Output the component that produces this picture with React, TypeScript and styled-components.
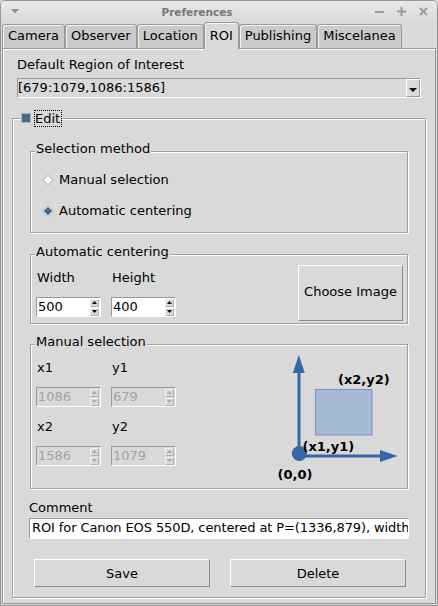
import React from 'react';
import styled, { createGlobalStyle } from 'styled-components';

const GlobalStyle = createGlobalStyle`
  html, body {
    margin: 0;
    padding: 0;
    background: #d9d9d9;
  }
  body {
    font-family: "DejaVu Sans", "Liberation Sans", sans-serif;
    font-size: 13px;
    color: #000;
  }
  * {
    box-sizing: border-box;
  }
`;

const Window = styled.div`
  width: 438px;
  height: 606px;
  display: flex;
  flex-direction: column;
  border: 1px solid #969696;
  border-radius: 5px 5px 0 0;
  background: #d9d9d9;
  overflow: hidden;
`;

const TitleBar = styled.div`
  height: 21px;
  display: flex;
  align-items: center;
  padding: 0 9px 0 10px;
  background: linear-gradient(#e8e8e8, #dadada);
`;

const TitleText = styled.div`
  flex: 1;
  text-align: center;
  font-weight: bold;
  font-size: 10.5px;
  color: #777;
`;

const TitleButtons = styled.div`
  display: flex;
  gap: 13px;
`;

const TabBar = styled.div`
  height: 26px;
  display: flex;
  align-items: flex-end;
  padding-left: 1px;
`;

const Tab = styled.div<{ $active?: boolean }>`
  position: relative;
  z-index: ${(p) => (p.$active ? 1 : 0)};
  line-height: 16px;
  padding: ${(p) => (p.$active ? '5px 5px 6px' : '3px 5px 4px')};
  margin-bottom: ${(p) => (p.$active ? '-2px' : '0')};
  border: 1px solid #9a9a9a;
  border-bottom: none;
  border-radius: 3px 3px 0 0;
  background: ${(p) => (p.$active ? '#d9d9d9' : '#cacaca')};
  box-shadow: inset 1px 1px 0 #f4f4f4;
  white-space: nowrap;
`;

const Panel = styled.div`
  flex: 1;
  margin: 0 1px 1px;
  border: 1px solid #9a9a9a;
  box-shadow: inset 1px 1px 0 #fff;
  padding: 8px 9px 0;
`;

const FieldLabel = styled.div<{ $indent?: number; $top?: number }>`
  line-height: 16px;
  margin-left: ${(p) => p.$indent ?? 0}px;
  margin-top: ${(p) => p.$top ?? 0}px;
`;

const Combo = styled.div`
  margin: 5px 0 0 5px;
  width: 404px;
  height: 20px;
  display: flex;
  border: 1px solid;
  border-color: #9a9a9a #fff #fff #9a9a9a;
  background: #d9d9d9;
`;

const ComboText = styled.span`
  flex: 1;
  line-height: 16px;
  padding-top: 1px;
`;

const ComboButton = styled.div`
  width: 14px;
  display: grid;
  place-items: center;
  border: 1px solid;
  border-color: #fff #9a9a9a #9a9a9a #fff;
  padding-top: 4px;
`;

const LabelFrame = styled.div<{ $pad: string }>`
  position: relative;
  border: 1px solid #9f9f9f;
  box-shadow: inset 1px 1px 0 #fff, 1px 1px 0 #fff;
  padding: ${(p) => p.$pad};
`;

const EditFrame = styled(LabelFrame)`
  margin-top: 20px;
  display: flex;
  flex-direction: column;
`;

const SubFrame = styled(LabelFrame)<{ $gap: number }>`
  margin-top: ${(p) => p.$gap}px;
`;

const Legend = styled.div<{ $top: number; $left: number }>`
  position: absolute;
  top: ${(p) => p.$top}px;
  left: ${(p) => p.$left}px;
  display: flex;
  align-items: center;
  gap: 3px;
  padding: 0 1px;
  line-height: 16px;
  background: #d9d9d9;
`;

const CheckBox = styled.span`
  width: 10px;
  height: 10px;
  margin-top: -1px;
  background: #4a6984;
  border: 1px solid #aab6c2;
`;

const FocusText = styled.span`
  border: 1px dotted #000;
  line-height: 15px;
  padding: 0 1px 0 0;
`;

const RadioList = styled.div`
  display: flex;
  flex-direction: column;
  gap: 15px;
`;

const RadioRow = styled.div`
  display: flex;
  align-items: center;
  gap: 6px;
  line-height: 16px;
`;

const RadioSlot = styled.span`
  width: 11px;
  height: 11px;
  display: grid;
  place-items: center;
`;

const Diamond = styled.span<{ $checked?: boolean }>`
  width: 8px;
  height: 8px;
  transform: rotate(45deg);
  background: ${(p) => (p.$checked ? '#4a6984' : '#fff')};
  border: 1px solid ${(p) => (p.$checked ? '#e6e6e6' : '#b5b5b5')};
`;

const SizeRow = styled.div`
  display: flex;
  justify-content: space-between;
  align-items: flex-start;
`;

const SpinGrid = styled.div<{ $top: number }>`
  margin-top: ${(p) => p.$top}px;
  display: grid;
  grid-template-columns: 65px 65px;
  column-gap: 10px;
  row-gap: 11px;
`;

const GridLabel = styled.div<{ $gapTop?: number }>`
  line-height: 16px;
  padding-left: 1px;
  margin-top: ${(p) => p.$gapTop ?? 0}px;
`;

const SpinField = styled.div<{ $disabled?: boolean }>`
  height: 20px;
  display: flex;
  align-items: center;
  border: 1px solid;
  border-color: #9a9a9a #fff #fff #9a9a9a;
  background: ${(p) => (p.$disabled ? '#d9d9d9' : '#fff')};
  color: ${(p) => (p.$disabled ? '#a3a3a3' : '#000')};
`;

const SpinValue = styled.span`
  flex: 1;
  line-height: 16px;
  padding-left: 1px;
`;

const SpinArrows = styled.div`
  width: 9px;
  margin-right: 1px;
  display: flex;
  flex-direction: column;
  gap: 1px;
`;

const SpinArrow = styled.div`
  height: 8px;
  display: grid;
  place-items: center;
  background: #d9d9d9;
  border: 1px solid;
  border-color: #f2f2f2 #b0b0b0 #b0b0b0 #f2f2f2;
`;

const RaisedButton = styled.button<{ $w: number; $h: number }>`
  width: ${(p) => p.$w}px;
  height: ${(p) => p.$h}px;
  padding: 0;
  font: inherit;
  color: #000;
  background: #d9d9d9;
  border: 1px solid;
  border-color: #fff #8c8c8c #8c8c8c #fff;
`;

const ChooseButton = styled(RaisedButton)`
  flex: none;
  padding-bottom: 3px;
`;

const ManualRow = styled.div`
  display: flex;
  justify-content: space-between;
  align-items: flex-start;
`;

const Diagram = styled.svg`
  flex: none;
  display: block;
`;

const CommentEntry = styled.div`
  margin: 2px 0 0 -1px;
  width: 380px;
  height: 21px;
  padding: 1px 0 0 2px;
  line-height: 16px;
  letter-spacing: -0.1px;
  white-space: nowrap;
  overflow: hidden;
  background: #fff;
  border: 1px solid;
  border-color: #9a9a9a #fff #fff #9a9a9a;
`;

const ButtonRow = styled.div`
  margin-top: 20px;
  padding-left: 4px;
  display: flex;
  gap: 20px;
`;

const Arrow: React.FC<{ up?: boolean; color: string }> = ({ up, color }) => (
  <svg width="5" height="3" viewBox="0 0 5 3">
    <polygon points={up ? '0,3 5,3 2.5,0' : '0,0 5,0 2.5,3'} fill={color} />
  </svg>
);

const Spinbox: React.FC<{ value: string; disabled?: boolean }> = ({ value, disabled }) => {
  const c = disabled ? '#a8a8a8' : '#000';
  return (
    <SpinField $disabled={disabled}>
      <SpinValue>{value}</SpinValue>
      <SpinArrows>
        <SpinArrow>
          <Arrow up color={c} />
        </SpinArrow>
        <SpinArrow>
          <Arrow color={c} />
        </SpinArrow>
      </SpinArrows>
    </SpinField>
  );
};

const tabs = ['Camera', 'Observer', 'Location', 'ROI', 'Publishing', 'Miscelanea'];
const blue = '#3666a6';

const App: React.FC = () => {
  return (
    <>
      <GlobalStyle />
      <Window>
        <TitleBar>
          <svg width="8" height="5" viewBox="0 0 8 5">
            <polygon points="0,0 8,0 4,4.5" fill="#8e8e8e" />
          </svg>
          <TitleText>Preferences</TitleText>
          <TitleButtons>
            <svg width="9" height="9" viewBox="0 0 9 9">
              <rect x="0" y="4" width="9" height="2" fill="#9a9a9a" />
            </svg>
            <svg width="9" height="9" viewBox="0 0 9 9">
              <rect x="0" y="3.5" width="9" height="2" fill="#9a9a9a" />
              <rect x="3.5" y="0" width="2" height="9" fill="#9a9a9a" />
            </svg>
            <svg width="9" height="9" viewBox="0 0 9 9">
              <path d="M1 1 L8 8 M8 1 L1 8" stroke="#9a9a9a" strokeWidth="2" />
            </svg>
          </TitleButtons>
        </TitleBar>

        <TabBar>
          {tabs.map((t) => (
            <Tab key={t} $active={t === 'ROI'}>
              {t}
            </Tab>
          ))}
        </TabBar>

        <Panel>
          <FieldLabel $indent={5}>Default Region of Interest</FieldLabel>
          <Combo>
            <ComboText>[679:1079,1086:1586]</ComboText>
            <ComboButton>
              <svg width="8" height="4" viewBox="0 0 8 4">
                <polygon points="0,0 8,0 4,4" fill="#000" />
              </svg>
            </ComboButton>
          </Combo>

          <EditFrame $pad="32px 17px 10px">
            <Legend $top={-9} $left={7}>
              <CheckBox />
              <FocusText>Edit</FocusText>
            </Legend>

            <SubFrame $gap={0} $pad="20px 0 13px 11px">
              <Legend $top={-11} $left={4}>Selection method</Legend>
              <RadioList>
                <RadioRow>
                  <RadioSlot>
                    <Diamond />
                  </RadioSlot>
                  Manual selection
                </RadioRow>
                <RadioRow>
                  <RadioSlot>
                    <Diamond $checked />
                  </RadioSlot>
                  Automatic centering
                </RadioRow>
              </RadioList>
            </SubFrame>

            <SubFrame $gap={21} $pad="10px 4px 2px 5px">
              <Legend $top={-11} $left={4}>Automatic centering</Legend>
              <SizeRow>
                <SpinGrid $top={5}>
                  <GridLabel>Width</GridLabel>
                  <GridLabel>Height</GridLabel>
                  <Spinbox value="500" />
                  <Spinbox value="400" />
                </SpinGrid>
                <ChooseButton $w={105} $h={56}>Choose Image</ChooseButton>
              </SizeRow>
            </SubFrame>

            <SubFrame $gap={20} $pad="8px 2px 0 5px">
              <Legend $top={-11} $left={4}>Manual selection</Legend>
              <ManualRow>
                <SpinGrid $top={7}>
                  <GridLabel>x1</GridLabel>
                  <GridLabel>y1</GridLabel>
                  <Spinbox value="1086" disabled />
                  <Spinbox value="679" disabled />
                  <GridLabel $gapTop={1}>x2</GridLabel>
                  <GridLabel $gapTop={1}>y2</GridLabel>
                  <Spinbox value="1586" disabled />
                  <Spinbox value="1079" disabled />
                </SpinGrid>
                <Diagram width="134" height="135" viewBox="0 0 134 135">
                  <rect x="44.5" y="36.5" width="56.5" height="45.5" fill="#a6bad5" stroke="#7593bd" />
                  <line x1="28" y1="102" x2="28" y2="19" stroke={blue} strokeWidth="3" />
                  <polygon points="27.8,2 21.8,20 33.8,20" fill={blue} />
                  <line x1="28" y1="103" x2="110" y2="103" stroke={blue} strokeWidth="3" />
                  <polygon points="126.5,103 109,97 109,109" fill={blue} />
                  <circle cx="28.3" cy="100.5" r="7.5" fill={blue} />
                  <g fontFamily="DejaVu Sans, sans-serif" fontWeight="bold" fontSize="13" fill="#000">
                    <text x="67" y="30.5">(x2,y2)</text>
                    <text x="31.5" y="98">(x1,y1)</text>
                    <text x="6.5" y="125.5">(0,0)</text>
                  </g>
                </Diagram>
              </ManualRow>
            </SubFrame>

            <FieldLabel $indent={-1} $top={11}>
              Comment
            </FieldLabel>
            <CommentEntry>ROI for Canon EOS 550D, centered at P=(1336,879), width</CommentEntry>
            <ButtonRow>
              <RaisedButton $w={176} $h={28}>Save</RaisedButton>
              <RaisedButton $w={176} $h={28}>Delete</RaisedButton>
            </ButtonRow>
          </EditFrame>
        </Panel>
      </Window>
    </>
  );
};

export default App;
